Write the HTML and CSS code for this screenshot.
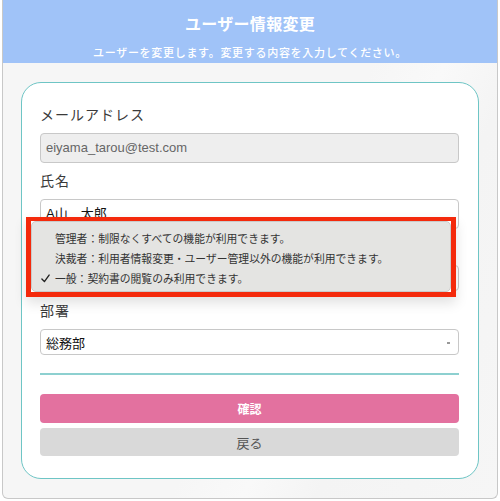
FILE: index.html
```html
<!DOCTYPE html>
<html lang="ja">
<head>
<meta charset="utf-8">
<link rel="stylesheet" href="styles.css">
</head>
<body>
<div class="window">
  <header class="header">
    <h1 class="title">ユーザー情報変更</h1>
    <p class="subtitle">ユーザーを変更します。変更する内容を入力してください。</p>
  </header>
  <main class="content">
    <div class="card">
      <div class="field">
        <div class="label">メールアドレス</div>
        <div class="input input-disabled">eiyama_tarou@test.com</div>
      </div>
      <div class="field">
        <div class="label">氏名</div>
        <div class="input">A山　太郎</div>
      </div>
      <div class="field field-select">
        <div class="label">権限</div>
        <div class="select"><span>一般</span><span class="caret"></span></div>
      </div>
      <div class="field field-select">
        <div class="label">部署</div>
        <div class="select"><span>総務部</span><span class="caret"></span></div>
      </div>
      <div class="divider"></div>
      <button class="btn btn-primary">確認</button>
      <button class="btn btn-secondary">戻る</button>

      <div class="highlight">
        <ul class="menu">
          <li class="menu-item"><span class="check"></span>管理者：制限なくすべての機能が利用できます。</li>
          <li class="menu-item"><span class="check"></span>決裁者：利用者情報変更・ユーザー管理以外の機能が利用できます。</li>
          <li class="menu-item"><span class="check"><svg class="check-icon" viewBox="0 0 10 10" width="9" height="9"><path d="M1 5.5 L3.8 8.5 L9 1.2" fill="none" stroke="#222" stroke-width="1.5" stroke-linecap="round" stroke-linejoin="round"/></svg></span>一般：契約書の閲覧のみ利用できます。</li>
        </ul>
      </div>
    </div>
  </main>
</div>
</body>
</html>
```
FILE: styles.css
```css
* { box-sizing: border-box; }
html, body { margin: 0; padding: 0; background: #ffffff; }
body {
  font-family: "Noto Sans CJK JP", "Liberation Sans", sans-serif;
  color: #333;
}
.window {
  margin: 0 2px;
  height: 499px;
  border: 1px solid #c8c8c8;
  border-top: none;
  border-radius: 0 0 6px 6px;
  background: linear-gradient(115deg, #f6f6f6 0%, #f6f6f6 55%, #f9f9f9 65%, #f4f4f4 75%, #f6f6f6 100%);
  overflow: hidden;
}
.header {
  height: 63px;
  background: #a0c3f8;
  text-align: center;
  color: #fff;
  padding-top: 11px;
}
.title {
  margin: 0;
  font-size: 16px;
  line-height: 24px;
  font-weight: 700;
  letter-spacing: 0.3px;
}
.subtitle {
  margin: 9px 0 0;
  font-size: 11px;
  line-height: 16px;
  letter-spacing: 0.7px;
  font-weight: 500;
}
.content {
  padding: 19px 18px 0 18px;
}
.card {
  position: relative;
  background: #fff;
  border: 1px solid #6ec5c5;
  border-radius: 20px;
  padding: 21px 19px 22px 18px;
}
.field { margin-bottom: 7px; }
.field-select { margin-bottom: 9px; }
.label {
  font-size: 14px;
  line-height: 20px;
  letter-spacing: 1px;
  color: #3a3a3a;
  margin-bottom: 9px;
}
.input {
  height: 30px;
  border: 1px solid #c8c8c8;
  border-radius: 4px;
  background: #fff;
  padding: 0 5px;
  font-family: "Liberation Sans", "Noto Sans CJK JP", sans-serif;
  font-size: 13px;
  line-height: 28px;
  color: #111;
}
.input-disabled {
  background: #eeeeee;
  color: #666;
}
.select {
  height: 26px;
  border: 1px solid #c8c8c8;
  border-radius: 4px;
  background: #fff;
  padding: 0 8px 0 5px;
  display: flex;
  align-items: center;
  justify-content: space-between;
  font-size: 13px;
  color: #111;
}
.caret {
  width: 3px;
  height: 1.5px;
  background: #999;
  margin-top: 2px;
}
.divider {
  height: 2px;
  background: #8dd0d0;
  margin: 18px 0 19px;
}
.btn {
  display: block;
  width: 100%;
  border: none;
  border-radius: 4px;
  font-family: "Noto Sans CJK JP", sans-serif;
  padding: 0;
}
.btn-primary {
  height: 29px;
  background: #e3719f;
  color: #fff;
  font-size: 12px;
  font-weight: 700;
  margin-bottom: 5px;
}
.btn-secondary {
  height: 28px;
  background: #d9d9d9;
  color: #555;
  font-size: 13px;
}
.highlight {
  position: absolute;
  left: 4px;
  top: 134px;
  width: 430px;
  height: 80px;
  border: 5px solid #f42a0c;
  border-top-width: 4px;
  box-shadow: 0 6px 12px rgba(0, 0, 0, 0.12);
  background: #fff;
}
.menu {
  list-style: none;
  margin: 0;
  height: 100%;
  padding: 6px 0 0 9px;
  background: #e4e4e2;
  border: 1px solid #cacaca;
  border-radius: 5px;
}
.menu-item {
  font-size: 10.8px;
  line-height: 20px;
  color: #333;
  display: flex;
  align-items: center;
  white-space: nowrap;
}
.check {
  width: 14px;
  flex: none;
  display: flex;
  align-items: center;
}
.check-icon { display: block; }
```
